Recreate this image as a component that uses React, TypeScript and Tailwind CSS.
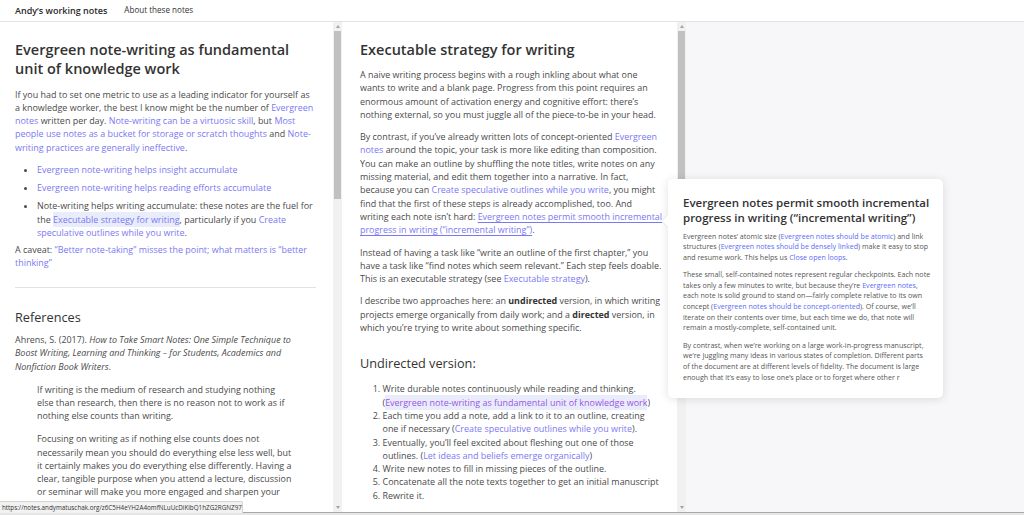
import React from "react";

const A = ({ children, hl, visited, u }: { children: React.ReactNode; hl?: boolean; visited?: boolean; u?: boolean }) => (
  <span
    className={
      (visited ? "text-[#9a55e6] " : "text-[#7b78f2] ") +
      (hl ? "bg-[#e9edfb] py-[1px] " : "") +
      (u ? "underline decoration-[0.5px] underline-offset-[1.5px] " : "")
    }
  >
    {children}
  </span>
);

const CA = ({ children }: { children: React.ReactNode }) => <span className="text-[#5b6df6]">{children}</span>;

const UpArrow = () => (
  <div className="h-[9px] flex items-center justify-center">
    <div className="w-0 h-0 border-l-[2.5px] border-r-[2.5px] border-b-[3px] border-l-transparent border-r-transparent border-b-[#a3a3a3]" />
  </div>
);
const DownArrow = () => (
  <div className="h-[9px] flex items-center justify-center">
    <div className="w-0 h-0 border-l-[2.5px] border-r-[2.5px] border-t-[3px] border-l-transparent border-r-transparent border-t-[#a3a3a3]" />
  </div>
);

const Scrollbar = ({ thumb }: { thumb: string }) => (
  <div className="w-[9px] shrink-0 bg-[#f1f1f1] flex flex-col">
    <UpArrow />
    <div className={"mx-[1px] bg-[#c1c1c1] " + thumb} />
    <div className="flex-1" />
    <DownArrow />
  </div>
);

export default function App() {
  return (
    <div className="relative w-[1024px] h-[515px] overflow-hidden bg-[#f7f7f9] font-['Open_Sans','Noto_Sans',sans-serif] text-[#4a4a4a] flex flex-col">
      {/* header */}
      <div className="h-[22px] shrink-0 bg-white border-b border-[#e3e3e3] flex items-center pl-[15px]">
        <span className="text-[9px] font-semibold text-[#2a2a2a]">Andy’s working notes</span>
        <span className="ml-[17px] text-[8.1px] text-[#333]">About these notes</span>
      </div>

      <div className="flex h-[490px]">
        {/* left panel */}
        <div className="flex w-[342px] shrink-0 bg-white">
          <div className="w-[333px] shrink-0 overflow-hidden pl-[15px] pr-[10px] pt-[18px] text-[8.95px] leading-[13.3px] whitespace-nowrap">
            <h1 className="text-[14.5px] leading-[19px] font-semibold text-[#333]">
              Evergreen note-writing as fundamental
              <br />
              unit of knowledge work
            </h1>
            <p className="mt-[9.5px]">
              If you had to set one metric to use as a leading indicator for yourself as
              <br />a knowledge worker, the best I know might be the number of{" "}
              <A>
                Evergreen
                <br />
                notes
              </A>{" "}
              written per day. <A>Note-writing can be a virtuosic skill</A>, but{" "}
              <A>
                Most
                <br />
                people use notes as a bucket for storage or scratch thoughts
              </A>{" "}
              and{" "}
              <A>
                Note-
                <br />
                writing practices are generally ineffective
              </A>
              .
            </p>
            <ul className="mt-[9.5px] pl-[22px] list-disc flex flex-col gap-[4.7px]">
              <li>
                <A>Evergreen note-writing helps insight accumulate</A>
              </li>
              <li>
                <A>Evergreen note-writing helps reading efforts accumulate</A>
              </li>
              <li>
                Note-writing helps writing accumulate: these notes are the fuel for
                <br />
                the <A hl>Executable strategy for writing</A>, particularly if you{" "}
                <A>
                  Create
                  <br />
                  speculative outlines while you write
                </A>
                .
              </li>
            </ul>
            <p className="mt-[3.5px]">
              A caveat:{" "}
              <A>
                “Better note-taking” misses the point; what matters is “better
                <br />
                thinking”
              </A>
            </p>
            <hr className="mt-[18px] mr-[7px] border-t border-[#e2e2e2]" />
            <h2 className="mt-[21px] text-[12.7px] leading-[17px] text-[#333]">References</h2>
            <p className="mt-[6.5px]">
              Ahrens, S. (2017).{" "}
              <i>
                How to Take Smart Notes: One Simple Technique to
                <br />
                Boost Writing, Learning and Thinking – for Students, Academics and
                <br />
                Nonfiction Book Writers
              </i>
              .
            </p>
            <blockquote className="mt-[10px] ml-[22px]">
              <p>
                If writing is the medium of research and studying nothing
                <br />
                else than research, then there is no reason not to work as if
                <br />
                nothing else counts than writing.
              </p>
              <p className="mt-[9.5px]">
                Focusing on writing as if nothing else counts does not
                <br />
                necessarily mean you should do everything else less well, but
                <br />
                it certainly makes you do everything else differently. Having a
                <br />
                clear, tangible purpose when you attend a lecture, discussion
                <br />
                or seminar will make you more engaged and sharpen your
                <br />
                focus.
              </p>
            </blockquote>
          </div>
          <Scrollbar thumb="h-[168px]" />
        </div>

        {/* middle panel */}
        <div className="flex w-[344px] shrink-0 bg-white">
          <div className="w-[335px] shrink-0 overflow-hidden pl-[18px] pr-[10px] pt-[18px] text-[8.95px] leading-[13.3px] whitespace-nowrap">
            <h1 className="text-[14.5px] leading-[19px] font-semibold text-[#333]">Executable strategy for writing</h1>
            <p className="mt-[9px]">
              A naive writing process begins with a rough inkling about what one
              <br />
              wants to write and a blank page. Progress from this point requires an
              <br />
              enormous amount of activation energy and cognitive effort: there’s
              <br />
              nothing external, so you must juggle all of the piece-to-be in your head.
            </p>
            <p className="mt-[9px]">
              By contrast, if you’ve already written lots of concept-oriented{" "}
              <A>
                Evergreen
                <br />
                notes
              </A>{" "}
              around the topic, your task is more like editing than composition.
              <br />
              You can make an outline by shuffling the note titles, write notes on any
              <br />
              missing material, and edit them together into a narrative. In fact,
              <br />
              because you can <A>Create speculative outlines while you write</A>, you might
              <br />
              find that the first of these steps is already accomplished, too. And
              <br />
              writing each note isn’t hard:{" "}
              <A u>
                Evergreen notes permit smooth incremental
                <br />
                progress in writing (“incremental writing”)
              </A>
              .
            </p>
            <p className="mt-[9px]">
              Instead of having a task like “write an outline of the first chapter,” you
              <br />
              have a task like “find notes which seem relevant.” Each step feels doable.
              <br />
              This is an executable strategy (see <A>Executable strategy</A>).
            </p>
            <p className="mt-[9px]">
              I describe two approaches here: an <b className="font-bold text-[#333]">undirected</b> version, in which
              writing
              <br />
              projects emerge organically from daily work; and a <b className="font-bold text-[#333]">directed</b>{" "}
              version, in
              <br />
              which you’re trying to write about something specific.
            </p>
            <h2 className="mt-[21px] text-[12.7px] leading-[17px] text-[#333]">Undirected version:</h2>
            <ol className="mt-[10px] pl-[22.5px] list-decimal">
              <li>
                Write durable notes continuously while reading and thinking.
                <br />(
                <A hl visited>
                  Evergreen note-writing as fundamental unit of knowledge work
                </A>
                )
              </li>
              <li>
                Each time you add a note, add a link to it to an outline, creating
                <br />
                one if necessary (<A>Create speculative outlines while you write</A>).
              </li>
              <li>
                Eventually, you’ll feel excited about fleshing out one of those
                <br />
                outlines. (<A>Let ideas and beliefs emerge organically</A>)
              </li>
              <li>Write new notes to fill in missing pieces of the outline.</li>
              <li>Concatenate all the note texts together to get an initial manuscript</li>
              <li>Rewrite it.</li>
            </ol>
          </div>
          <Scrollbar thumb="h-[150px]" />
        </div>
        <div className="flex-1" />
      </div>
      <div className="h-[1px] bg-[#a8a8a8]" />
      <div className="flex-1 bg-[#e6e6e6]" />

      {/* popup card */}
      <div className="absolute left-[668px] top-[179px] w-[275px] h-[219px] bg-white rounded-[5px] shadow-[0_1px_10px_rgba(0,0,0,0.12)] px-[15px] pt-[15.5px] text-[#555] whitespace-nowrap">
        <div className="absolute left-[-4px] top-[38px] w-[8px] h-[8px] bg-white rotate-45 shadow-[-1px_1px_2px_rgba(0,0,0,0.06)]" />
        <h3 className="relative text-[11.5px] leading-[15px] font-semibold text-[#333]">
          Evergreen notes permit smooth incremental
          <br />
          progress in writing (“incremental writing”)
        </h3>
        <div className="relative text-[7.1px] leading-[10.6px]">
          <p className="mt-[6px]">
            Evergreen notes’ atomic size (<CA>Evergreen notes should be atomic</CA>) and link
            <br />
            structures (<CA>Evergreen notes should be densely linked</CA>) make it easy to stop
            <br />
            and resume work. This helps us <CA>Close open loops</CA>.
          </p>
          <p className="mt-[7px]">
            These small, self-contained notes represent regular checkpoints. Each note
            <br />
            takes only a few minutes to write, but because they’re <CA>Evergreen notes</CA>,
            <br />
            each note is solid ground to stand on—fairly complete relative to its own
            <br />
            concept (<CA>Evergreen notes should be concept-oriented</CA>). Of course, we’ll
            <br />
            iterate on their contents over time, but each time we do, that note will
            <br />
            remain a mostly-complete, self-contained unit.
          </p>
          <p className="mt-[7px]">
            By contrast, when we’re working on a large work-in-progress manuscript,
            <br />
            we’re juggling many ideas in various states of completion. Different parts
            <br />
            of the document are at different levels of fidelity. The document is large
            <br />
            enough that it’s easy to lose one’s place or to forget where other r
          </p>
        </div>
      </div>

      {/* status bar */}
      <div className="absolute left-0 top-[501px] h-[12px] w-[243px] bg-[#f2f2f2] border-t border-r border-[#d4d4d4] rounded-tr-[2px] flex items-center pl-[2px] text-[6.3px] text-[#333] whitespace-nowrap overflow-hidden">
        https://notes.andymatuschak.org/z6C5H4eYH2A4omfNLuUcDiKibQ1hZG2RGNZ97
      </div>
    </div>
  );
}
